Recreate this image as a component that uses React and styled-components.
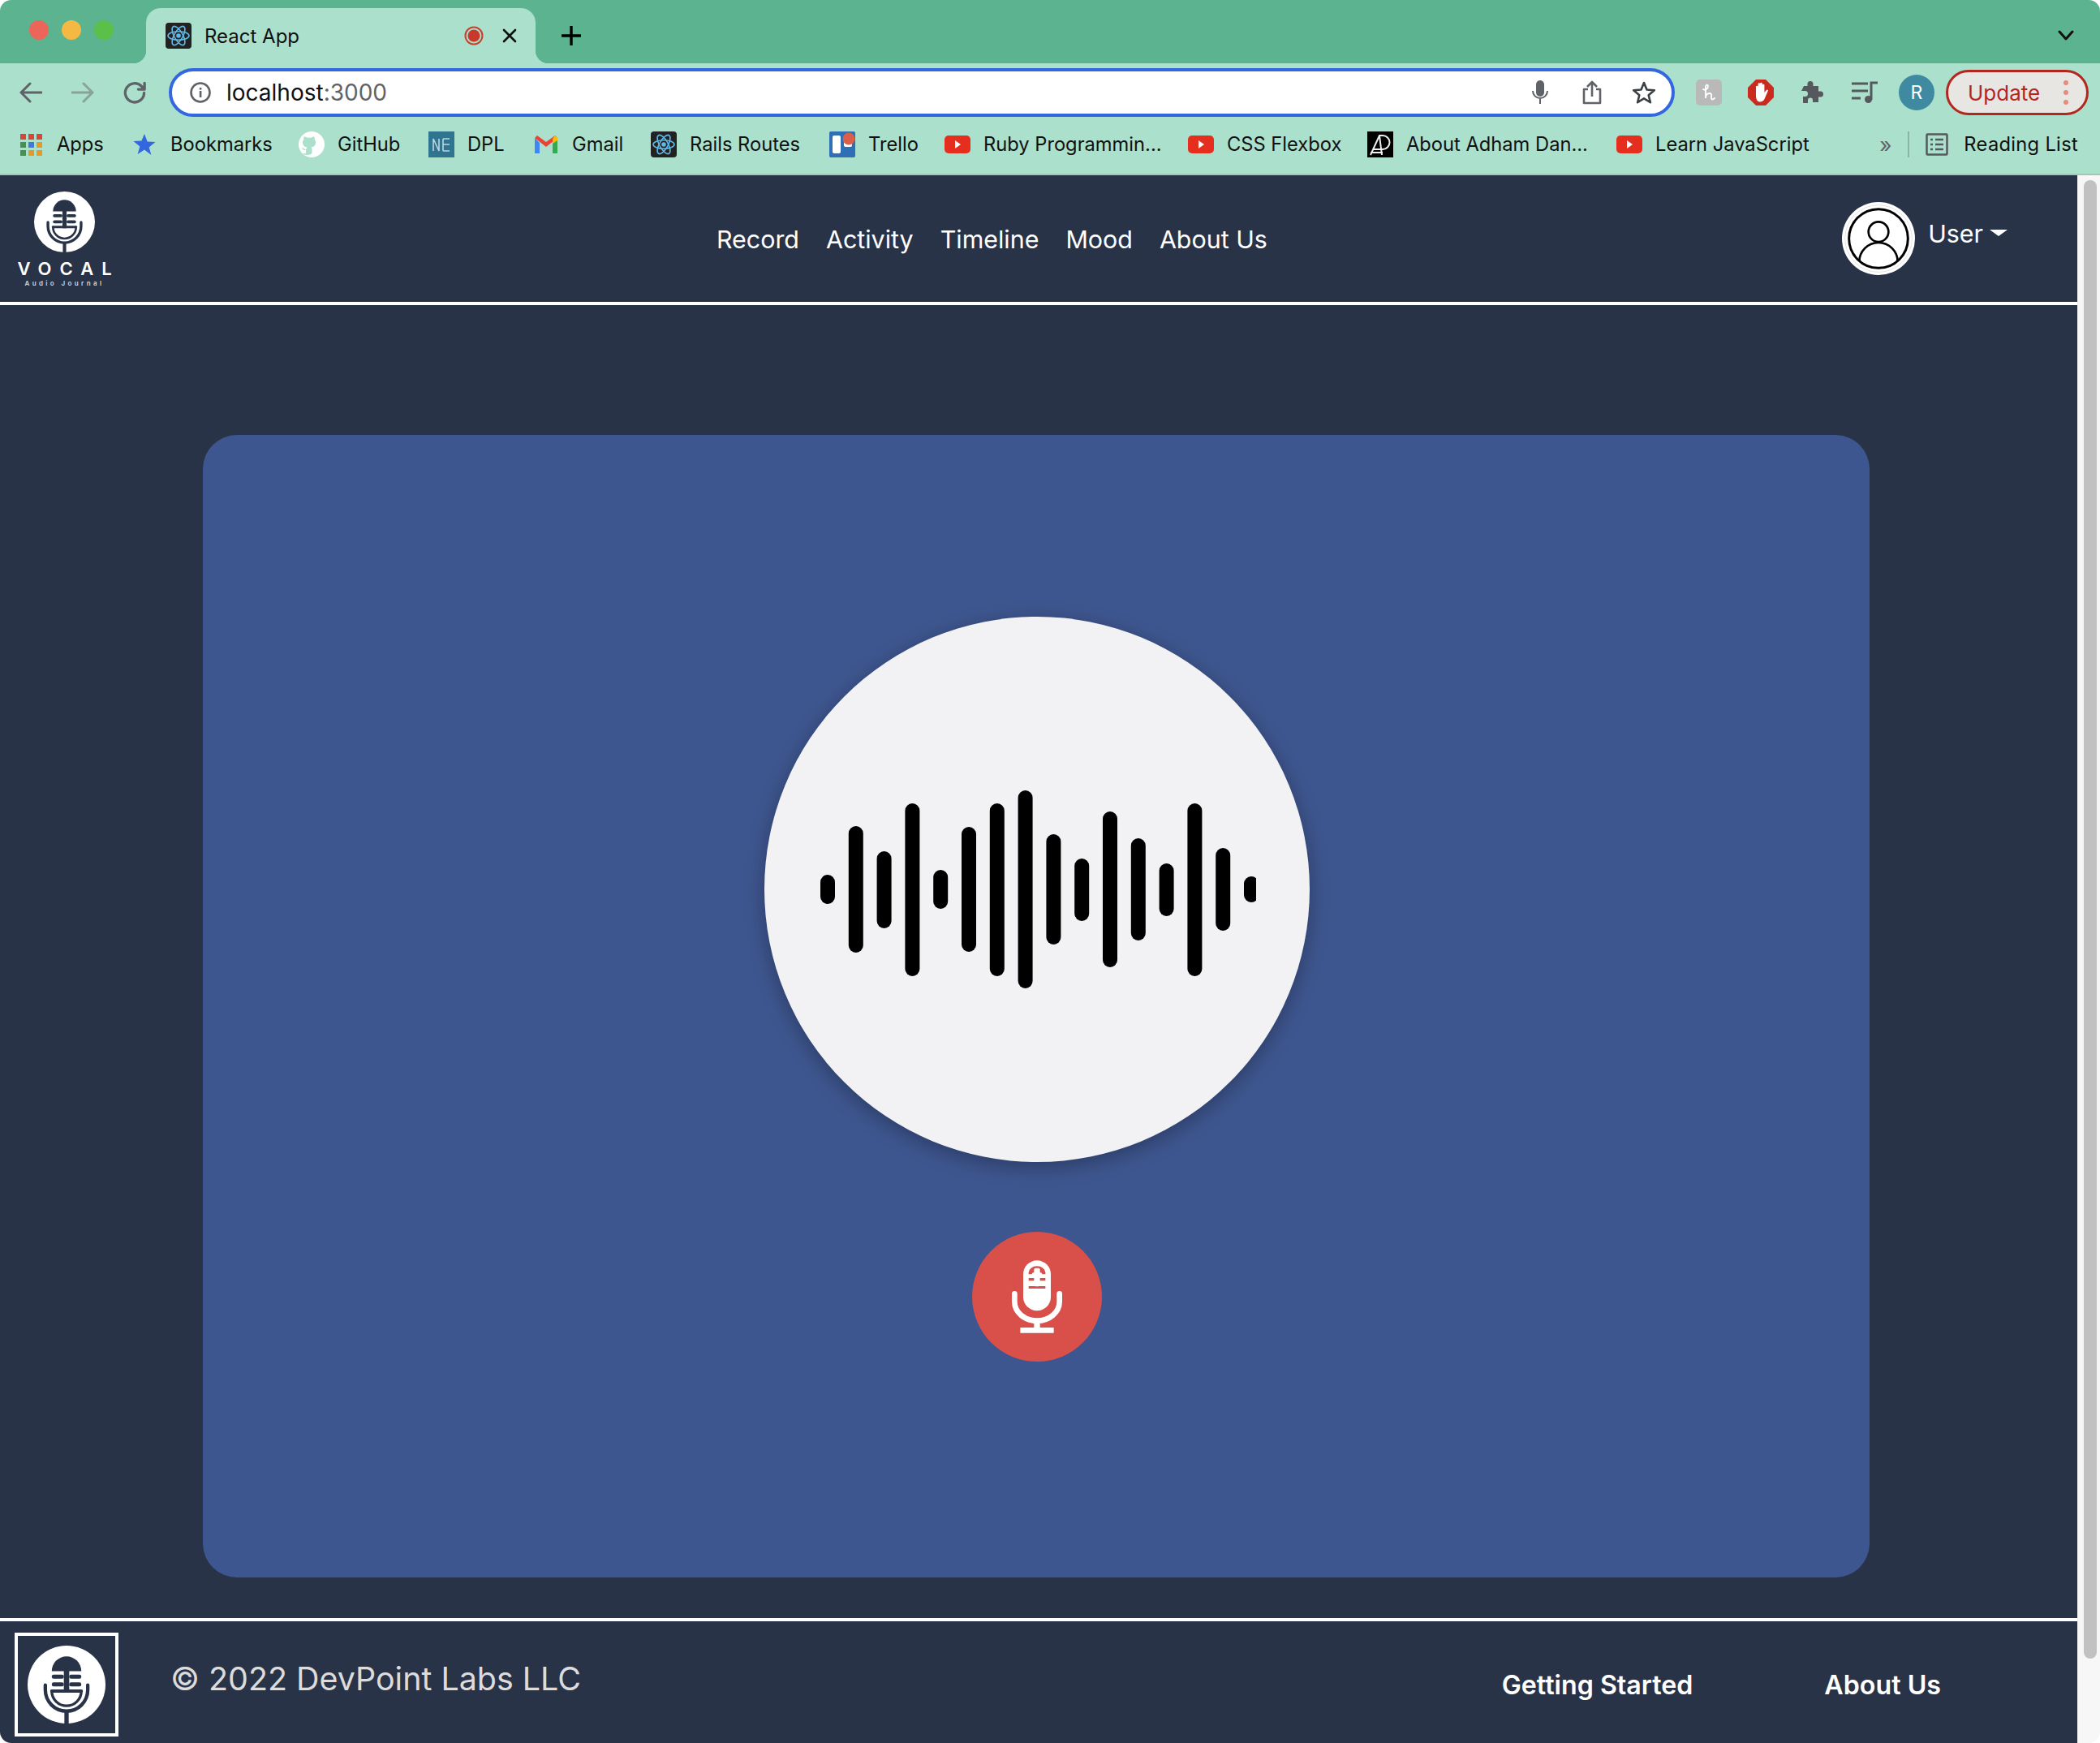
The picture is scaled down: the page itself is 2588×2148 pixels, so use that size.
import React from "react";
import styled, { createGlobalStyle } from "styled-components";

const NAVY = "#293348";
const MINT = "#abe0cc";
const FONT = `Inter, "Liberation Sans", sans-serif`;

const GlobalStyle = createGlobalStyle`
  html, body {
    margin: 0;
    padding: 0;
    background: #fff;
    font-family: ${FONT};
  }
`;

const Window = styled.div`
  width: 2588px;
  height: 2148px;
  overflow: hidden;
  border-radius: 14px;
  display: flex;
  flex-direction: column;
`;

/* browser chrome */
const TabStrip = styled.div`
  height: 78px;
  background: #5bb48f;
  display: flex;
  align-items: flex-end;
  padding-left: 36px;
`;

const Lights = styled.div`
  display: flex;
  gap: 16px;
  align-self: flex-start;
  margin-top: 25px;
`;

const Light = styled.span`
  width: 24px;
  height: 24px;
  border-radius: 50%;
  background: ${(p) => p.$color};
`;

const Tab = styled.div`
  position: relative;
  width: 480px;
  height: 68px;
  margin-left: 40px;
  padding: 0 22px 0 24px;
  box-sizing: border-box;
  background: ${MINT};
  border-radius: 18px 18px 0 0;
  display: flex;
  align-items: center;
  gap: 16px;
  font-size: 24px;
  color: #111;

  &::before,
  &::after {
    content: "";
    position: absolute;
    bottom: 0;
    width: 16px;
    height: 16px;
  }
  &::before {
    left: -16px;
    background: radial-gradient(circle at 0 0, transparent 16px, ${MINT} 16.5px);
  }
  &::after {
    right: -16px;
    background: radial-gradient(circle at 100% 0, transparent 16px, ${MINT} 16.5px);
  }
`;

const TabTitle = styled.span`
  flex: 1;
`;

const TabClose = styled.div`
  display: flex;
  margin-left: 6px;
`;

const NewTab = styled.div`
  display: flex;
  align-self: flex-start;
  margin: 32px 0 0 32px;
`;

const TabMenu = styled.div`
  display: flex;
  align-self: flex-start;
  margin: 36px 0 0 auto;
  padding-right: 32px;
`;

const Toolbar = styled.div`
  height: 72px;
  background: ${MINT};
  display: flex;
  align-items: center;
  padding-left: 6px;
`;

const Slot = styled.div`
  width: 64px;
  height: 60px;
  flex: none;
  display: flex;
  align-items: center;
  justify-content: center;
`;

const AddressBar = styled.div`
  width: 1856px;
  height: 60px;
  margin-left: 10px;
  box-sizing: border-box;
  background: #fff;
  border: 4px solid #3367e0;
  border-radius: 30px;
  display: flex;
  align-items: center;
  padding: 0 2px 0 22px;
`;

const Url = styled.div`
  flex: 1;
  margin-left: 19px;
  font-size: 28px;
  color: #111;
  span {
    color: #5f6368;
  }
`;

const Extensions = styled.div`
  display: flex;
  align-items: center;
  margin-left: 10px;
`;

const Avatar = styled.div`
  width: 44px;
  height: 44px;
  border-radius: 50%;
  background: #3f8aa0;
  color: #fff;
  font-size: 23px;
  display: flex;
  align-items: center;
  justify-content: center;
`;

const UpdatePill = styled.div`
  width: 176px;
  height: 56px;
  margin-left: 4px;
  box-sizing: border-box;
  border: 3px solid #b3261e;
  border-radius: 28px;
  background: #e7e6e2;
  color: #b3261e;
  font-size: 26px;
  display: flex;
  align-items: center;
  justify-content: space-between;
  padding: 0 22px 0 24px;
`;

const PillDots = styled.div`
  display: flex;
  flex-direction: column;
  gap: 6px;
  i {
    width: 6px;
    height: 6px;
    border-radius: 50%;
    background: #e58b80;
  }
`;

const BookmarkBar = styled.div`
  height: 64px;
  background: ${MINT};
  border-bottom: 2px solid #9cc9b8;
  display: flex;
  align-items: flex-start;
  padding-left: 22px;
  font-size: 23.7px;
  color: #111;
`;

const Bookmark = styled.div`
  width: ${(p) => p.$width}px;
  height: 56px;
  flex: none;
  display: flex;
  align-items: center;
  gap: 16px;
  white-space: nowrap;

  span {
    margin-bottom: 2px;
  }
`;

const BookmarkEnd = styled.div`
  margin-left: auto;
  height: 56px;
  display: flex;
  align-items: center;
  padding-right: 27px;
`;

const More = styled.span`
  color: #5f6368;
  font-size: 26px;
  margin-right: 20px;
`;

const Divider = styled.span`
  width: 2px;
  height: 32px;
  background: #8bb5a5;
  margin-right: 20px;
`;

const ReadingLabel = styled.span`
  margin: 0 0 2px 19px;
  letter-spacing: 0.3px;
`;

/* app */
const Body = styled.div`
  flex: 1;
  display: flex;
  min-height: 0;
`;

const Page = styled.div`
  width: 2560px;
  background: ${NAVY};
  display: flex;
  flex-direction: column;
`;

const Scrollbar = styled.div`
  flex: 1;
  background: #f7f7f7;
  border-left: 1px solid #ececec;
  padding: 6px 4px 0 7px;
`;

const Thumb = styled.div`
  height: 1822px;
  background: #c1c1c1;
  border-radius: 8px;
`;

const Nav = styled.nav`
  height: 156px;
  flex: none;
  border-bottom: 4px solid #fff;
  display: flex;
  align-items: center;
  padding: 0 86px 0 22px;
  color: #fff;
`;

const Brand = styled.div`
  width: 115px;
  align-self: flex-start;
  padding-top: 20px;
  display: flex;
  flex-direction: column;
  align-items: center;
`;

const BrandName = styled.div`
  margin: 8px -10px 0 0;
  font-size: 22px;
  line-height: 24px;
  font-weight: 600;
  letter-spacing: 10px;
`;

const BrandTag = styled.div`
  font-size: 8px;
  line-height: 10px;
  font-weight: 600;
  letter-spacing: 3.4px;
  margin-top: 1px;
  color: #d6d8de;
  white-space: nowrap;
`;

const NavLinks = styled.div`
  display: flex;
  gap: 33px;
  margin: 2px 0 0 746px;
  font-size: 30.4px;
`;

const UserMenu = styled.div`
  margin-left: auto;
  display: flex;
  align-items: center;
  font-size: 30.4px;
`;

const UserName = styled.span`
  margin-left: 16px;
  margin-bottom: 12px;
`;

const Caret = styled.span`
  margin: 0 0 14px 8px;
  border-top: 8px solid #fff;
  border-left: 11px solid transparent;
  border-right: 11px solid transparent;
`;

const Main = styled.main`
  flex: 1;
  padding: 160px 256px 50px 250px;
  display: flex;
`;

const Card = styled.section`
  flex: 1;
  background: #3e568f;
  border-radius: 42px;
  padding: 224px 0 0 2px;
  display: flex;
  flex-direction: column;
  align-items: center;
`;

const Disc = styled.div`
  width: 672px;
  height: 672px;
  border-radius: 50%;
  background: #f2f2f5;
  box-shadow: 0 6px 24px rgba(0, 0, 0, 0.3);
  display: flex;
  align-items: center;
  justify-content: center;
`;

const RecordButton = styled.button`
  width: 160px;
  height: 160px;
  margin-top: 86px;
  padding: 0;
  border: 0;
  border-radius: 50%;
  background: #d9504a;
  display: flex;
  align-items: center;
  justify-content: center;
`;

const Footer = styled.footer`
  height: 154px;
  flex: none;
  box-sizing: border-box;
  border-top: 4px solid #fff;
  display: flex;
  align-items: center;
  padding: 0 168px 0 18px;
`;

const FooterLogo = styled.div`
  width: 128px;
  height: 128px;
  box-sizing: border-box;
  border: 4px solid #fff;
  display: flex;
  align-items: center;
  justify-content: center;
  margin-top: 6px;
`;

const Copyright = styled.div`
  margin: 0 0 8px 64px;
  font-size: 39.4px;
  color: #dcdcdc;
`;

const FooterLinks = styled.div`
  margin: 6px 0 0 auto;
  display: flex;
  gap: 162px;
  font-size: 32.2px;
  font-weight: 600;
  color: #fff;
`;

/* drawings */
const Line = ({ d, size = 28, color = "#5f6368", width = 3, box = 28 }) => (
  <svg width={size} height={size} viewBox={`0 0 ${box} ${box}`} fill="none" stroke={color} strokeWidth={width} strokeLinecap="round" strokeLinejoin="round">
    <path d={d} />
  </svg>
);

const ReactIcon = () => (
  <svg width="32" height="32" viewBox="0 0 32 32">
    <rect width="32" height="32" rx="4" fill="#222" />
    <g fill="none" stroke="#61b8e6" strokeWidth="1.6">
      <ellipse cx="16" cy="16" rx="13" ry="5.2" />
      <ellipse cx="16" cy="16" rx="13" ry="5.2" transform="rotate(60 16 16)" />
      <ellipse cx="16" cy="16" rx="13" ry="5.2" transform="rotate(120 16 16)" />
    </g>
    <circle cx="16" cy="16" r="2.8" fill="#61b8e6" />
  </svg>
);

const RecordDot = () => (
  <svg width="24" height="24" viewBox="0 0 24 24">
    <circle cx="12" cy="12" r="10.5" fill="none" stroke="#c8402e" strokeWidth="2" />
    <circle cx="12" cy="12" r="7.5" fill="#c8392b" />
  </svg>
);

const AppsIcon = () => (
  <svg width="32" height="32" viewBox="0 0 32 32">
    {["#dc4437", "#dc4437", "#dc4437", "#46924d", "#3f78e0", "#e39a26", "#46924d", "#e39a26", "#e39a26"].map((c, i) => (
      <rect key={i} x={3 + (i % 3) * 10} y={3 + Math.floor(i / 3) * 10} width="7" height="7" fill={c} />
    ))}
  </svg>
);

const StarIcon = () => (
  <svg width="32" height="32" viewBox="0 0 32 32">
    <path d="M16 3l3.6 9.6 9.9.5-7.8 6.3 2.7 9.6L16 22.5 7.6 28l2.7-9.6-7.8-6.3 9.9-.5z" fill="#3367e0" />
  </svg>
);

const GithubIcon = () => (
  <svg width="32" height="32" viewBox="0 0 32 32">
    <circle cx="16" cy="16" r="16" fill="#fff" />
    <path d="M9 27v-4c-3 .6-4-1-5-3 1.5 0 2.5 1 3.5 2 .6.6 1.5.5 2 0 0-1 .5-1.8 1-2.4-3.5-.5-5.5-2.5-5.5-6.1 0-1.5.5-2.8 1.4-3.8-.2-1-.2-2.2.3-3.500 1.500 0 2.800.8 3.800 1.500a13 13 0 0 1 5 0c1-.7 2.300-1.500 3.800-1.500.5 1.300.5 2.500.3 3.500.9 1 1.400 2.300 1.400 3.800 0 3.600-2 5.600-5.500 6.100.7.7 1 1.600 1 2.700V27c-3 2.500-9 2.500-12 0z" fill={MINT} />
  </svg>
);

const DplIcon = () => (
  <svg width="32" height="32" viewBox="0 0 32 32">
    <rect width="32" height="32" fill="#2f7590" />
    <path d="M6 24V9l7 15V9M18 9h8M18 16h8M18 24h8M18 9v15" fill="none" stroke="#bcd6de" strokeWidth="1.6" />
  </svg>
);

const GmailIcon = () => (
  <svg width="32" height="32" viewBox="0 0 32 32">
    <path d="M2 8v19h6V14z" fill="#4285f4" />
    <path d="M24 14v13h6V8z" fill="#34a853" />
    <path d="M2 8l14 11 14-11-3-3-11 8L5 5z" fill="#ea4335" />
    <path d="M24 9l3-4 3 3v3l-6 4z" fill="#fbbc04" />
  </svg>
);

const TrelloIcon = () => (
  <svg width="32" height="32" viewBox="0 0 32 32">
    <rect width="32" height="32" rx="2" fill="#2f6fb5" />
    <rect x="4" y="5" width="10" height="22" rx="2" fill="#fff" />
    <rect x="18" y="5" width="10" height="14" rx="2" fill="#fff" />
    <circle cx="24" cy="9" r="7.5" fill="#d95f4a" />
  </svg>
);

const YoutubeIcon = () => (
  <svg width="32" height="32" viewBox="0 0 32 32">
    <rect y="5" width="32" height="22" rx="5" fill="#e62e1e" />
    <path d="M13 11l7 5-7 5z" fill="#fff" />
  </svg>
);

const AdIcon = () => (
  <svg width="32" height="32" viewBox="0 0 32 32">
    <rect width="32" height="32" fill="#000" />
    <path d="M4 29L15 5h4a8 8 0 0 1 0 17H8M15 5l3 24M4 26h15" fill="none" stroke="#eee" strokeWidth="2" />
  </svg>
);

const ReadingIcon = () => (
  <svg width="28" height="28" viewBox="0 0 28 28" fill="none" stroke="#55585c" strokeWidth="2.5">
    <rect x="1.5" y="1.5" width="25" height="25" rx="1" />
    <path d="M6 8h3M12 8h10M6 14h3M12 14h10M6 20h3M12 20h10" />
  </svg>
);

const Honey = () => (
  <svg width="32" height="32" viewBox="0 0 32 32">
    <rect width="32" height="32" rx="5" fill="#b9b9b9" />
    <path d="M9 12c3 2 6-1 6-4 0-2-3-2-3 1v14c0-4 2-6 5-6 3 0 2 4 2 6s2 2 4 0" fill="none" stroke="#fff" strokeWidth="1.8" strokeLinecap="round" />
  </svg>
);

const StopHand = () => (
  <svg width="32" height="32" viewBox="0 0 32 32">
    <path d="M10 0h12l10 10v12L22 32H10L0 22V10z" fill="#cb2b1e" />
    <path d="M10 19V9a1.3 1.3 0 0 1 2.6 0V5.500a1.300 1.300 0 0 1 2.600 0V5a1.300 1.300 0 0 1 2.600 0v2a1.300 1.300 0 0 1 2.600 0v9l2.500-3c1.200-1.300 2.700 0 1.800 1.300L20.500 24c-1 2-3 3.500-5.500 3.500-3.500 0-5-3-5-8.500z" fill="#fff" />
  </svg>
);

const PuzzleIcon = () => (
  <svg width="30" height="30" viewBox="0 0 30 30">
    <path d="M12 1a3.5 3.5 0 0 1 3.5 3.5V7H22v6.500h2.500a3.500 3.500 0 0 1 0 7H22V27h-7v-2.500a3 3 0 0 0-6 0V28H3v-8h2.500a3.500 3.500 0 0 0 0-7H1l3-6h4.500V4.500A3.500 3.500 0 0 1 12 1z" fill="#55585c" />
  </svg>
);

const QueueIcon = () => (
  <svg width="34" height="30" viewBox="0 0 34 30" fill="none" stroke="#55585c" strokeWidth="3">
    <path d="M1 4h20M1 13h20M1 22h11" />
    <path d="M25 24V3h8" />
    <circle cx="21.5" cy="23.5" r="4.5" fill="#55585c" stroke="none" />
  </svg>
);

const MicSmall = () => (
  <svg width="20" height="30" viewBox="0 0 20 30">
    <rect x="5" y="0" width="10" height="20" rx="5" fill="#5f6368" />
    <path d="M1 13a9 9 0 0 0 18 0M10 22v7" fill="none" stroke="#5f6368" strokeWidth="2" />
  </svg>
);

const LogoMark = ({ size }) => (
  <svg width={size} height={size} viewBox="35 35 290 290">
    <circle cx="180" cy="180" r="145" fill="#fff" />
    <g fill={NAVY}>
      <path d="M125 130a55 55 0 0 1 110 0z" />
      <rect x="170" y="120" width="20" height="90" />
      <rect x="125" y="143" width="45" height="15" rx="7" />
      <rect x="190" y="143" width="45" height="15" rx="7" />
      <rect x="125" y="172" width="45" height="15" rx="7" />
      <rect x="190" y="172" width="45" height="15" rx="7" />
      <rect x="172" y="280" width="16" height="50" />
    </g>
    <g fill="none" stroke={NAVY} strokeLinecap="round">
      <path d="M125 204h110" strokeWidth="12" />
      <path d="M125 204a55 55 0 0 0 110 0" strokeWidth="10" />
      <path d="M101 182v18a79 79 0 0 0 158 0v-18" strokeWidth="13" />
    </g>
  </svg>
);

const ProfileIcon = () => (
  <svg width="90" height="90" viewBox="210 84 270 270">
    <defs>
      <clipPath id="ring">
        <circle cx="345" cy="219" r="108" />
      </clipPath>
    </defs>
    <circle cx="345" cy="219" r="135" fill="#fff" />
    <circle cx="345" cy="219" r="124" fill="none" stroke="#c8c8c8" strokeWidth="1.5" />
    <circle cx="345" cy="219" r="109" fill="none" stroke="#000" strokeWidth="9" />
    <circle cx="345" cy="194" r="37" fill="none" stroke="#000" strokeWidth="8" />
    <circle cx="345" cy="305" r="71" fill="none" stroke="#000" strokeWidth="8" clipPath="url(#ring)" />
  </svg>
);

// top and bottom of each bar, taken from the reference
const BARS = [
  [1077, 1113], [1017, 1173], [1048, 1143], [989, 1202],
  [1071, 1119], [1018, 1172], [989, 1202], [973, 1217],
  [1027, 1163], [1057, 1134], [999, 1191], [1032, 1158],
  [1063, 1128], [989, 1202], [1044, 1146], [1079, 1111],
];

const Waveform = () => (
  <svg width="540" height="246" viewBox="1008 972 540 246">
    {BARS.map(([top, bottom], i) => (
      <rect key={i} x={1011 + i * 34.8} y={top} width="18" height={bottom - top} rx="9" fill="#000" />
    ))}
  </svg>
);

const RecordMic = () => (
  <svg width="160" height="160" viewBox="54 54 480 480">
    <rect x="243" y="160" width="102" height="186" rx="51" fill="#fff" />
    <g fill="#d9504a">
      <path d="M263 205a31 24 0 0 1 62 0v6h-62z" />
      <rect x="263" y="225" width="62" height="10" />
      <rect x="263" y="255" width="62" height="9" />
    </g>
    <g fill="#fff">
      <rect x="283" y="188" width="22" height="68" rx="6" />
      <rect x="275" y="205" width="38" height="13" rx="6" />
      <rect x="275" y="238" width="38" height="13" rx="6" />
    </g>
    <path d="M211 283v30a83 70 0 0 0 166 0v-30" fill="none" stroke="#fff" strokeWidth="20" strokeLinecap="round" />
    <rect x="283" y="380" width="22" height="35" fill="#fff" />
    <rect x="232" y="408" width="124" height="20" rx="2" fill="#fff" />
  </svg>
);

const BOOKMARKS = [
  { label: "Apps", width: 140, icon: <AppsIcon /> },
  { label: "Bookmarks", width: 206, icon: <StarIcon /> },
  { label: "GitHub", width: 160, icon: <GithubIcon /> },
  { label: "DPL", width: 129, icon: <DplIcon /> },
  { label: "Gmail", width: 145, icon: <GmailIcon /> },
  { label: "Rails Routes", width: 220, icon: <ReactIcon /> },
  { label: "Trello", width: 142, icon: <TrelloIcon /> },
  { label: "Ruby Programmin...", width: 300, icon: <YoutubeIcon /> },
  { label: "CSS Flexbox", width: 221, icon: <YoutubeIcon /> },
  { label: "About Adham Dan...", width: 307, icon: <AdIcon /> },
  { label: "Learn JavaScript", width: 300, icon: <YoutubeIcon /> },
];

function App() {
  return (
    <Window>
      <GlobalStyle />
      <TabStrip>
        <Lights>
          <Light $color="#ec6559" />
          <Light $color="#f4b942" />
          <Light $color="#5ac04a" />
        </Lights>
        <Tab>
          <ReactIcon />
          <TabTitle>React App</TabTitle>
          <RecordDot />
          <TabClose>
            <Line d="M3 3l14 14M17 3L3 17" size={20} box={20} color="#111" width={2.6} />
          </TabClose>
        </Tab>
        <NewTab>
          <Line d="M12 1v22M1 12h22" size={24} box={24} color="#000" width={3.4} />
        </NewTab>
        <TabMenu>
          <Line d="M2 3l8 9 8-9" size={20} box={20} color="#111" width={3} />
        </TabMenu>
      </TabStrip>

      <Toolbar>
        <Slot><Line d="M27 14H2M13 3L2 14l11 11" /></Slot>
        <Slot><Line d="M1 14h25M15 3l11 11-11 11" color="#8aa39a" /></Slot>
        <Slot><Line d="M24 14a10.5 10.5 0 1 1-3-7.5l3.5 3.5M24.5 3v7h-7" size={31} /></Slot>
        <AddressBar>
          <svg width="26" height="26" viewBox="0 0 26 26">
            <circle cx="13" cy="13" r="11.5" fill="none" stroke="#5f6368" strokeWidth="2.6" />
            <rect x="11.8" y="11" width="2.6" height="8" fill="#5f6368" />
            <rect x="11.8" y="7" width="2.6" height="2.6" fill="#5f6368" />
          </svg>
          <Url>localhost<span>:3000</span></Url>
          <Slot><MicSmall /></Slot>
          <Slot>
            <svg width="24" height="30" viewBox="0 0 24 30" fill="none" stroke="#5f6368" strokeWidth="2.6" strokeLinejoin="round">
              <path d="M7 11H2v17h20V11h-5M12 20V2M6 8l6-6 6 6" />
            </svg>
          </Slot>
          <Slot>
            <svg width="30" height="30" viewBox="0 0 30 30">
              <path d="M15 3l3.5 8.5 9.3.7-7.1 6 2.2 9L15 22.4 7.1 27.2l2.2-9-7.1-6 9.3-.7z" fill="none" stroke="#3c4043" strokeWidth="2.6" strokeLinejoin="round" />
            </svg>
          </Slot>
        </AddressBar>
        <Extensions>
          <Slot><Honey /></Slot>
          <Slot><StopHand /></Slot>
          <Slot><PuzzleIcon /></Slot>
          <Slot><QueueIcon /></Slot>
          <Slot><Avatar>R</Avatar></Slot>
        </Extensions>
        <UpdatePill>
          Update
          <PillDots><i /><i /><i /></PillDots>
        </UpdatePill>
      </Toolbar>

      <BookmarkBar>
        {BOOKMARKS.map((b) => (
          <Bookmark key={b.label} $width={b.width}>
            {b.icon}
            <span>{b.label}</span>
          </Bookmark>
        ))}
        <BookmarkEnd>
          <More>»</More>
          <Divider />
          <ReadingIcon />
          <ReadingLabel>Reading List</ReadingLabel>
        </BookmarkEnd>
      </BookmarkBar>

      <Body>
        <Page>
          <Nav>
            <Brand>
              <LogoMark size={75} />
              <BrandName>VOCAL</BrandName>
              <BrandTag>Audio Journal</BrandTag>
            </Brand>
            <NavLinks>
              <span>Record</span>
              <span>Activity</span>
              <span>Timeline</span>
              <span>Mood</span>
              <span>About Us</span>
            </NavLinks>
            <UserMenu>
              <ProfileIcon />
              <UserName>User</UserName>
              <Caret />
            </UserMenu>
          </Nav>

          <Main>
            <Card>
              <Disc>
                <Waveform />
              </Disc>
              <RecordButton aria-label="Record">
                <RecordMic />
              </RecordButton>
            </Card>
          </Main>

          <Footer>
            <FooterLogo>
              <LogoMark size={96} />
            </FooterLogo>
            <Copyright>© 2022 DevPoint Labs LLC</Copyright>
            <FooterLinks>
              <span>Getting Started</span>
              <span>About Us</span>
            </FooterLinks>
          </Footer>
        </Page>
        <Scrollbar>
          <Thumb />
        </Scrollbar>
      </Body>
    </Window>
  );
}

export default App;
